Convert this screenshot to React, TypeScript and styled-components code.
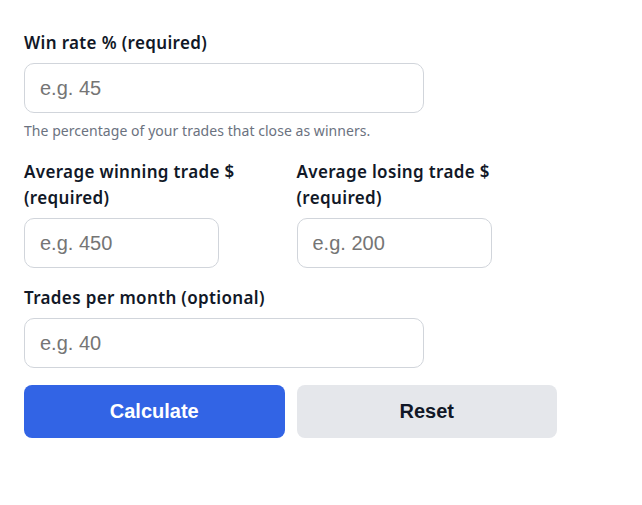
import styled, { createGlobalStyle } from "styled-components";

const GlobalStyle = createGlobalStyle`
  body {
    margin: 0;
    background: #fff;
    font-family: "Noto Sans", "Open Sans", sans-serif;
    color: #111827;
  }
`;

const Form = styled.form`
  width: 533px;
  padding: 30px 24px 24px 24px;
  display: flex;
  flex-direction: column;
  gap: 17px;
`;

const Row = styled.div`
  display: grid;
  grid-template-columns: 1fr 1fr;
  align-items: start;
  gap: 12px;
`;

const Field = styled.div`
  display: flex;
  flex-direction: column;
`;

const Label = styled.label`
  font-size: 17px;
  font-weight: 600;
  line-height: 26px;
  letter-spacing: 0.35px;
  color: #111827;
  margin-bottom: 7px;
`;

const Input = styled.input`
  box-sizing: border-box;
  width: 75%;
  height: 50px;
  padding: 0 15px;
  border: 1px solid #d1d5db;
  border-radius: 10px;
  font-family: "Liberation Sans", Arial, sans-serif;
  font-size: 20px;
  color: #111827;
  background: #fff;
  outline: none;

  &::placeholder {
    color: #757575;
  }
`;

const Help = styled.div`
  margin-top: 7px;
  font-size: 14px;
  line-height: 22px;
  letter-spacing: 0.05px;
  color: #6b7280;
`;

const Actions = styled.div`
  display: grid;
  grid-template-columns: 1fr 1fr;
  gap: 12px;
`;

const Button = styled.button<{ $primary?: boolean }>`
  height: 53px;
  border: none;
  border-radius: 8px;
  font-family: "Liberation Sans", Arial, sans-serif;
  font-size: 20px;
  font-weight: 700;
  cursor: pointer;
  background: ${(p) => (p.$primary ? "#3264e5" : "#e5e7eb")};
  color: ${(p) => (p.$primary ? "#fff" : "#111827")};
`;

export default function App() {
  return (
    <>
      <GlobalStyle />
      <Form onSubmit={(e) => e.preventDefault()}>
        <Field>
          <Label htmlFor="winRate">Win rate % (required)</Label>
          <Input id="winRate" type="text" placeholder="e.g. 45" />
          <Help>The percentage of your trades that close as winners.</Help>
        </Field>
        <Row>
          <Field>
            <Label htmlFor="avgWin">Average winning trade $ (required)</Label>
            <Input id="avgWin" type="text" placeholder="e.g. 450" />
          </Field>
          <Field>
            <Label htmlFor="avgLoss">Average losing trade $ (required)</Label>
            <Input id="avgLoss" type="text" placeholder="e.g. 200" />
          </Field>
        </Row>
        <Field>
          <Label htmlFor="trades">Trades per month (optional)</Label>
          <Input id="trades" type="text" placeholder="e.g. 40" />
        </Field>
        <Actions>
          <Button type="submit" $primary>Calculate</Button>
          <Button type="button">Reset</Button>
        </Actions>
      </Form>
    </>
  );
}
